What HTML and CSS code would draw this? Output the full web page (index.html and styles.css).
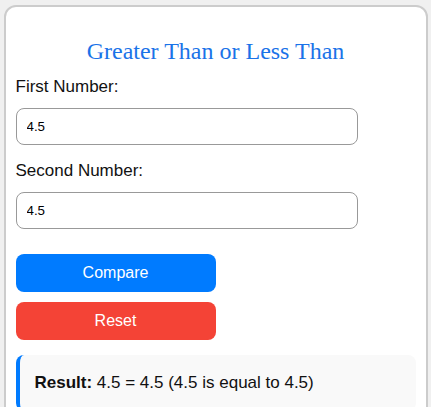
FILE: index.html
```html
<!DOCTYPE html>
<html>
<head>
<meta charset="utf-8">
<link rel="stylesheet" href="styles.css">
</head>
<body>
<div class="card">
  <h2 class="title">Greater Than or Less Than</h2>
  <div class="field">
    <label class="label" for="a">First Number:</label>
    <input class="input" id="a" type="text" value="4.5">
  </div>
  <div class="field">
    <label class="label" for="b">Second Number:</label>
    <input class="input" id="b" type="text" value="4.5">
  </div>
  <div class="actions">
    <button class="btn btn-compare">Compare</button>
    <button class="btn btn-reset">Reset</button>
  </div>
  <div class="result"><strong>Result:</strong> 4.5 = 4.5 (4.5 is equal to 4.5)</div>
</div>
</body>
</html>
```

FILE: styles.css
```css
html, body {
  margin: 0;
  padding: 0;
}
body {
  background: #f0f0f0;
  font-family: "Liberation Sans", Arial, sans-serif;
  padding-top: 5px;
  overflow: hidden;
}
.card {
  width: 400px;
  margin: 0 auto;
  padding: 10px;
  background: #fff;
  border: 2px solid #ccc;
  border-radius: 12px;
  min-height: 600px;
}
.title {
  font-family: "Liberation Serif", "Times New Roman", serif;
  font-weight: normal;
  font-size: 24px;
  color: #1a73e8;
  text-align: center;
  margin: 21px 0 12px;
}
.field {
  margin-bottom: 16px;
}
.label {
  display: block;
  font-size: 17px;
  color: #111;
  margin-bottom: 11px;
}
.input {
  display: block;
  width: 80%;
  padding: 10px;
  border: 1px solid #999;
  border-radius: 8px;
  font-family: "Liberation Sans", Arial, sans-serif;
  font-size: 13.33px;
  color: #000;
  margin: 0;
}
.actions {
  margin-top: 25px;
  display: flex;
  flex-direction: column;
  gap: 10px;
  align-items: flex-start;
}
.btn {
  width: 200px;
  padding: 10px;
  border: none;
  border-radius: 8px;
  color: #fff;
  font-family: "Liberation Sans", Arial, sans-serif;
  font-size: 16px;
  line-height: 18px;
}
.btn-compare {
  background: #007bff;
}
.btn-reset {
  background: #f44336;
}
.result {
  margin-top: 15px;
  padding: 18px 15px;
  background: #f9f9f9;
  border-left: 4px solid #007bff;
  border-radius: 8px;
  font-size: 17px;
  color: #111;
}
```
